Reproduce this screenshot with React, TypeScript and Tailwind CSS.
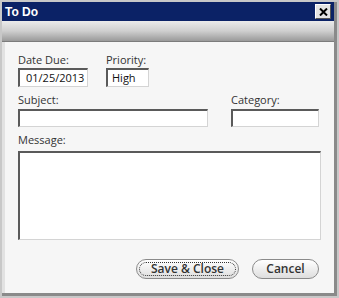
import React from "react";

const inputCls =
  "bg-white border border-t-[#5a5a5a] border-l-[#5a5a5a] border-r-[#d4d4d4] border-b-[#d4d4d4] border-t-2 border-l-2";

export default function App() {
  return (
    <div
      className="w-[339px] h-[298px] bg-[#c8c8c8] p-[2px] flex flex-col"
      style={{ fontFamily: '"Open Sans", "DejaVu Sans", sans-serif' }}
    >
      <div className="flex-1 flex flex-col border-r-[3px] border-r-[#8a8a8a] border-b-[3px] border-b-[#8a8a8a] bg-[#f6f6f6]">
        {/* Title bar */}
        <div className="h-[19px] bg-[#0b2266] flex items-center justify-between pl-[3px] pr-[3px]">
          <span className="text-white font-bold text-[12px] leading-none" style={{ fontFamily: '"Liberation Sans", Arial, sans-serif' }}>
            To Do
          </span>
          <div className="w-[16px] h-[15px] bg-[#e4e4e4] border border-t-white border-l-white border-r-[#555] border-b-[#555] flex items-center justify-center">
            <svg width="9" height="8" viewBox="0 0 9 8">
              <path d="M1 0.5 L8 7.5 M8 0.5 L1 7.5" stroke="#000" strokeWidth="2" />
            </svg>
          </div>
        </div>
        {/* Gradient toolbar */}
        <div className="h-[21px] bg-gradient-to-b from-[#ebebeb] via-[#cfcfcf] to-[#9a9a9a] border-b border-b-[#7c7c7c]" />
        {/* Content */}
        <div className="flex-1 border-l-[3px] border-l-[#e2e2e2] pl-[13px] pr-[14px] pt-[11px] text-[11px] text-[#333]">
          <div className="flex gap-[18px]">
            <div className="flex flex-col">
              <span className="leading-[14px]">Date Due:</span>
              <div className={`${inputCls} mt-[1px] w-[70px] h-[19px] flex items-center pl-[6px] text-[#111]`}>
                01/25/2013
              </div>
            </div>
            <div className="flex flex-col">
              <span className="leading-[14px]">Priority:</span>
              <div className={`${inputCls} mt-[1px] w-[43px] h-[19px] flex items-center pl-[4px] text-[#111]`}>
                High
              </div>
            </div>
          </div>
          <div className="flex justify-between mt-[6px]">
            <div className="flex flex-col">
              <span className="leading-[14px]">Subject:</span>
              <div className={`${inputCls} mt-[2px] w-[190px] h-[18px]`} />
            </div>
            <div className="flex flex-col mr-[1px]">
              <span className="leading-[14px]">Category:</span>
              <div className={`${inputCls} mt-[2px] w-[88px] h-[18px]`} />
            </div>
          </div>
          <div className="flex flex-col mt-[6px]">
            <span className="leading-[14px]">Message:</span>
            <div className={`${inputCls} mt-[4px] w-[303px] h-[89px]`} />
          </div>
          <div className="flex justify-end gap-[13px] mt-[19px] mr-[1px]">
            <button className="w-[103px] h-[20px] rounded-full border border-[#8a8a8a] bg-gradient-to-b from-white to-[#dedede] flex items-center justify-center p-[2px]">
              <span className="w-full h-full rounded-full border border-dotted border-[#333] flex items-center justify-center font-semibold text-[12px] text-[#333] leading-none">
                Save &amp; Close
              </span>
            </button>
            <button className="w-[67px] h-[20px] rounded-full border border-[#8a8a8a] bg-gradient-to-b from-white to-[#dedede] flex items-center justify-center font-semibold text-[12px] text-[#333] leading-none">
              Cancel
            </button>
          </div>
        </div>
      </div>
    </div>
  );
}
